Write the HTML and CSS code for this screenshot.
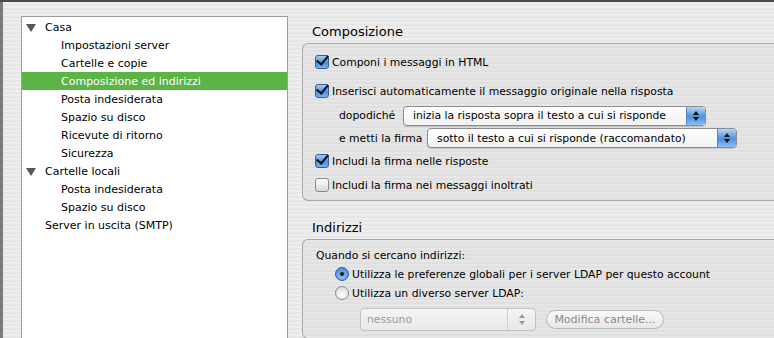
FILE: index.html
```html
<!DOCTYPE html>
<html lang="it">

<head>
    <meta charset="utf-8">
    <title>Impostazioni account</title>
    <link rel="stylesheet" href="styles.css">
</head>

<body>
    <div class="window">
        <div class="edge"></div>

        <nav class="tree">
            <ul>
                <li class="group"><span class="twisty"></span>Casa</li>
                <li class="child">Impostazioni server</li>
                <li class="child">Cartelle e copie</li>
                <li class="child valgt">Composizione ed indirizzi</li>
                <li class="child">Posta indesiderata</li>
                <li class="child">Spazio su disco</li>
                <li class="child">Ricevute di ritorno</li>
                <li class="child">Sicurezza</li>
                <li class="group"><span class="twisty"></span>Cartelle locali</li>
                <li class="child">Posta indesiderata</li>
                <li class="child">Spazio su disco</li>
                <li class="group">Server in uscita (SMTP)</li>
            </ul>
        </nav>

        <main class="prefs">
            <h2>Composizione</h2>
            <section class="box compose">
                <label class="row r1"><span class="check on"></span>Componi i messaggi in HTML</label>
                <label class="row r2"><span class="check on"></span>Inserisci automaticamente il messaggio originale nella risposta</label>
                <div class="row sub r3">
                    <span class="lbl l1">dopodiché</span>
                    <div class="popup first">
                        <span class="val">inizia la risposta sopra il testo a cui si risponde</span>
                        <span class="arrows"></span>
                    </div>
                </div>
                <div class="row sub r4">
                    <span class="lbl l2">e metti la firma</span>
                    <div class="popup sig">
                        <span class="val">sotto il testo a cui si risponde (raccomandato)</span>
                        <span class="arrows"></span>
                    </div>
                </div>
                <label class="row r5"><span class="check on"></span>Includi la firma nelle risposte</label>
                <label class="row r6"><span class="check"></span>Includi la firma nei messaggi inoltrati</label>
            </section>

            <h2 class="next">Indirizzi</h2>
            <section class="box addr">
                <p class="row">Quando si cercano indirizzi:</p>
                <label class="row ind"><span class="radio on"></span>Utilizza le preferenze globali per i server LDAP per questo account</label>
                <label class="row ind"><span class="radio"></span>Utilizza un diverso server LDAP:</label>
                <div class="row ldap">
                    <div class="popup off">
                        <span class="val">nessuno</span>
                        <span class="arrows"></span>
                    </div>
                    <button class="knap" disabled>Modifica cartelle...</button>
                </div>
            </section>
        </main>
    </div>
</body>

</html>
```

FILE: styles.css
```css
* {
    box-sizing: border-box;
}

html,
body {
    margin: 0;
    height: 100%;
    overflow: hidden;
}

body {
    font-family: "DejaVu Sans", sans-serif;
    font-size: 11px;
    color: #000;
}

.window {
    display: flex;
    height: 338px;
    border-top: 2px solid #4a4a4a;
    background: repeating-linear-gradient(to bottom, #eeeeee 0, #eeeeee 2px, #e7e7e7 2px, #e7e7e7 4px);
}

.edge {
    width: 3px;
    background: #7a7a7a;
    flex: none;
}

/* venstre liste */

.tree {
    width: 267px;
    margin: 14px 0 0 18px;
    background: #fff;
    border: 1px solid #9c9c9c;
    border-bottom: none;
    flex: none;
}

.tree ul {
    list-style: none;
    margin: 0;
    padding: 1px 0 0;
}

.tree li {
    height: 18px;
    line-height: 19px;
    white-space: nowrap;
    position: relative;
}

.tree .group {
    padding-left: 23px;
}

.tree .child {
    padding-left: 39px;
}

.twisty {
    position: absolute;
    left: 4px;
    top: 6px;
    width: 0;
    height: 0;
    border-left: 5px solid transparent;
    border-right: 5px solid transparent;
    border-top: 8px solid #555;
}

.tree .valgt {
    background: #5cb346;
    color: #fff;
}

/* højre side */

.prefs {
    flex: 1;
    margin-left: 14px;
    padding-top: 21px;
    min-width: 0;
    font-size: 10.8px;
}

.prefs h2 {
    margin: 0 0 2px;
    padding-left: 10px;
    font-size: 13px;
    font-weight: normal;
    line-height: 18px;
}

.prefs h2.next {
    margin-top: 18px;
}

.box {
    border: 1px solid #a9a9a9;
    border-right: none;
    border-radius: 6px 0 0 6px;
    background: repeating-linear-gradient(to bottom, #e6e6e6 0, #e6e6e6 2px, #e0e0e0 2px, #e0e0e0 4px);
    padding-left: 12px;
}

.compose {
    height: 158px;
    padding-top: 8px;
}

.addr {
    height: 100px;
    padding-top: 6px;
}

.row {
    display: flex;
    align-items: center;
    height: 20px;
    margin: 0;
    white-space: nowrap;
}

.r2 {
    margin-top: 9px;
}

.r3 {
    margin-top: 4px;
    height: 21px;
}

.r4 {
    margin-top: 2px;
}

.r5 {
    margin-top: 3px;
}

.r6 {
    margin-top: 4px;
}

.row.sub {
    padding-left: 24px;
}

.lbl {
    flex: none;
}

.l1 {
    width: 64px;
}

.l2 {
    width: 88px;
}

.addr .row {
    height: 18px;
    padding-left: 1px;
}

.addr .row.ind {
    padding-left: 20px;
    margin-top: 1px;
}

.addr .row.ldap {
    padding-left: 45px;
    height: 23px;
    margin-top: 6px;
}

/* kontroller */

.check {
    width: 14px;
    height: 14px;
    margin-right: 3px;
    border: 1px solid #8a8a8a;
    border-radius: 3px;
    background: linear-gradient(#fdfdfd, #d9d9d9);
    flex: none;
    position: relative;
}

.check.on {
    border-color: #2f5f9e;
    background: linear-gradient(#a8cdf4, #4c8fde 55%, #77b2ef);
}

.check.on::after {
    content: "";
    position: absolute;
    left: 3px;
    top: -3px;
    width: 5px;
    height: 10px;
    border-right: 2.5px solid #111;
    border-bottom: 2.5px solid #111;
    transform: rotate(40deg);
}

.radio {
    width: 14px;
    height: 14px;
    margin-right: 3px;
    border: 1px solid #8a8a8a;
    border-radius: 50%;
    background: radial-gradient(circle at 50% 70%, #ffffff, #d4d4d4);
    flex: none;
    position: relative;
}

.radio.on {
    border-color: #2f5f9e;
    background: radial-gradient(circle at 50% 70%, #8cc0f5, #3f82d6);
}

.radio.on::after {
    content: "";
    position: absolute;
    left: 4px;
    top: 4px;
    width: 4px;
    height: 4px;
    border-radius: 50%;
    background: #111;
}

.popup {
    display: flex;
    align-items: center;
    height: 20px;
    border: 1px solid #8d8d8d;
    border-radius: 4px;
    background: linear-gradient(#ffffff, #f1f1f1);
    box-shadow: 0 1px 1px rgba(0, 0, 0, 0.15);
    overflow: hidden;
    flex: none;
}

.popup.first {
    width: 303px;
}

.popup.sig {
    width: 310px;
}

.val {
    flex: 1;
    padding-left: 9px;
}

.arrows {
    width: 19px;
    height: 100%;
    border-left: 1px solid #5a86c0;
    background: linear-gradient(#b6d6f8, #4e8fdc 55%, #8cc0f4);
    position: relative;
}

.arrows::before,
.arrows::after {
    content: "";
    position: absolute;
    left: 6px;
    border-left: 3px solid transparent;
    border-right: 3px solid transparent;
}

.arrows::before {
    top: 4px;
    border-bottom: 4px solid #111;
}

.arrows::after {
    bottom: 4px;
    border-top: 4px solid #111;
}

.popup.off {
    width: 176px;
    height: 23px;
    border-color: #c2c2c2;
    color: #9a9a9a;
    background: linear-gradient(#f4f4f4, #e9e9e9);
    box-shadow: none;
}

.popup.off .val {
    padding-left: 6px;
}

.popup.off .arrows {
    width: 28px;
    border-left-color: #d0d0d0;
    background: none;
}

.popup.off .arrows::before,
.popup.off .arrows::after {
    left: 11px;
}

.popup.off .arrows::before {
    top: 5px;
    border-bottom-color: #999;
}

.popup.off .arrows::after {
    bottom: 5px;
    border-top-color: #999;
}

.knap {
    margin-left: 10px;
    height: 19px;
    width: 118px;
    padding: 0;
    border: 1px solid #b8b8b8;
    border-radius: 10px;
    background: linear-gradient(#fafafa, #e6e6e6);
    font-family: inherit;
    font-size: 11px;
    color: #8a8a8a;
}
```
